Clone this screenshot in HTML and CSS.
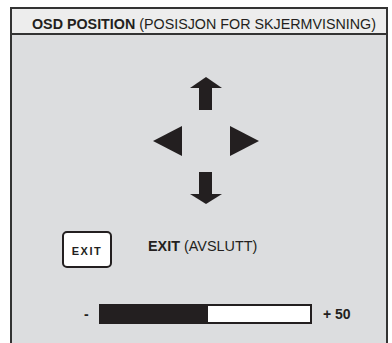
FILE: index.html
```html
<!DOCTYPE html>
<html>
<head>
<meta charset="utf-8">
<link rel="stylesheet" href="styles.css">
</head>
<body>
<div class="frame">
  <div class="header"><b>OSD POSITION</b> (POSISJON FOR SKJERMVISNING)</div>
  <div class="panel">
    <svg class="arrows" width="112" height="132" viewBox="0 0 112 132">
      <polygon points="40,13 56,2 72,13" />
      <rect x="49" y="12" width="13" height="23" />
      <polygon points="3,66 32,51 32,81" />
      <polygon points="80,51 109,66 80,81" />
      <rect x="49" y="97" width="13" height="23" />
      <polygon points="40,119 72,119 56,129" />
    </svg>
    <div class="exit-row">
      <div class="exit-btn">EXIT</div>
      <div class="exit-label"><b>EXIT</b> (AVSLUTT)</div>
    </div>
    <div class="slider-row">
      <span class="minus">-</span>
      <div class="bar"><div class="fill" style="width:51%"></div></div>
      <span class="value">+ 50</span>
    </div>
  </div>
</div>
</body>
</html>
```
FILE: styles.css
```css
html, body {
  margin: 0;
  padding: 0;
  background: #ffffff;
}
body {
  font-family: "Liberation Sans", Arial, sans-serif;
  color: #231f20;
  width: 392px;
  height: 343px;
  overflow: hidden;
}
.frame {
  box-sizing: border-box;
  margin: 7px 4px 0 10px;
  border: 2px solid #333333;
  border-bottom: none;
  height: 336px;
  background: #dcdddf;
}
.header {
  box-sizing: border-box;
  height: 26px;
  padding: 6px 0 0 20px;
  line-height: 18px;
  background: #ededed;
  border-bottom: 2px solid #333333;
  font-size: 14.3px;
  white-space: nowrap;
}
.header b {
  font-weight: bold;
}
.panel {
  display: flex;
  flex-direction: column;
}
.arrows {
  display: block;
  margin: 40px 0 0 138px;
  fill: #231f20;
}
.exit-row {
  display: flex;
  align-items: flex-start;
  margin-top: 24px;
  margin-left: 50px;
}
.exit-btn {
  box-sizing: border-box;
  width: 50px;
  height: 37px;
  border: 2px solid #231f20;
  border-radius: 5px;
  background: #ffffff;
  display: flex;
  align-items: center;
  justify-content: center;
  padding-top: 3px;
  font-size: 11px;
  font-weight: bold;
  letter-spacing: 1.5px;
}
.exit-label {
  margin-left: 36px;
  margin-top: 7px;
  font-size: 14.4px;
  line-height: 16px;
}
.slider-row {
  display: flex;
  align-items: center;
  margin-top: 36px;
  margin-left: 72px;
  height: 20px;
}
.minus {
  font-size: 14px;
  font-weight: bold;
  width: 5px;
}
.bar {
  box-sizing: border-box;
  width: 213px;
  height: 20px;
  margin-left: 10px;
  border: 2px solid #231f20;
  background: #ffffff;
}
.fill {
  height: 100%;
  background: #231f20;
}
.value {
  margin-left: 11px;
  font-size: 14px;
  font-weight: bold;
}
```
